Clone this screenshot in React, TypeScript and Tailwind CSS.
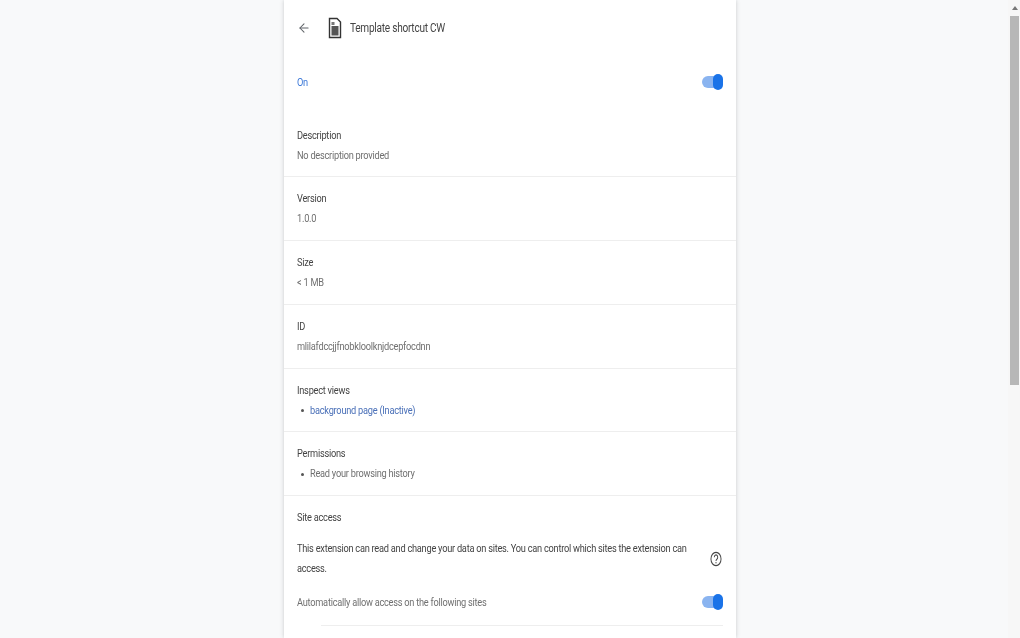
import { ArrowLeft } from "lucide-react"
import type { ReactNode } from "react"

// the reference is squeezed horizontally, so text gets narrowed from its left edge
function Squeezed({ children, className }: { children: ReactNode; className?: string }) {
    return <span className={`block origin-left scale-x-[0.84] whitespace-nowrap ${className ?? ""}`}>{children}</span>
}

function Toggle({ className }: { className?: string }) {
    return (
        <div className={`relative h-[12px] w-[21px] shrink-0 rounded-full bg-[#8ab4f0] ${className ?? ""}`}>
            <div className="absolute right-0 top-[-2px] h-[16px] w-[10px] rounded-full bg-[#1a73e8]" />
        </div>
    )
}

function InfoRow({ label, value }: { label: string; value: string }) {
    return (
        <div className="flex h-[63.75px] flex-col border-b border-[#eeeeee] pl-[13px] pt-[12px]">
            <Squeezed className="h-[20px] text-[11px] leading-[20px] text-[#444]">{label}</Squeezed>
            <Squeezed className="h-[20px] text-[11px] leading-[20px] text-[#707070]">{value}</Squeezed>
        </div>
    )
}

function ListRow({ label, value, link }: { label: string; value: string; link?: boolean }) {
    return (
        <div className="flex h-[63.75px] flex-col border-b border-[#eeeeee] pl-[13px] pt-[12px]">
            <Squeezed className="h-[20px] text-[11px] leading-[20px] text-[#444]">{label}</Squeezed>
            <div className="flex h-[20px] items-center text-[11px] leading-[20px]">
                <span className="ml-[4px] mr-[6px] h-[3px] w-[3px] rounded-full bg-[#555]" />
                <Squeezed className={link ? "text-[#4a70b8]" : "text-[#707070]"}>{value}</Squeezed>
            </div>
        </div>
    )
}

export default function App() {
    return (
        <div className="flex h-[638px] w-[1020px] overflow-hidden bg-[#f8f9fa] font-['Roboto',sans-serif] tracking-[-0.3px]">
            <div className="flex-1 pl-[284px]">
                <div className="h-[638px] w-[452px] bg-white shadow-[0_0_4px_rgba(60,64,67,0.25)] blur-[0.5px]">
                    {/* header */}
                    <div className="flex h-[55px] items-center pl-[11px]">
                        <div className="flex h-[18px] w-[18px] items-center justify-center text-[#5f6368]">
                            <ArrowLeft size={14} strokeWidth={1.8} />
                        </div>
                        <svg width="14" height="22" viewBox="0 0 14 22" className="ml-[15px]">
                            <path d="M1.5 1.5h7.5l3.5 3.5v15.5h-11z" fill="white" stroke="#333" strokeWidth="1.4" />
                            <rect x="3.5" y="9" width="7" height="9.5" fill="#555" />
                            <rect x="3.5" y="5" width="3" height="3" fill="#777" />
                        </svg>
                        <Squeezed className="ml-[8px] scale-x-[0.82] text-[12px] text-[#444]">Template shortcut CW</Squeezed>
                    </div>

                    <div className="flex h-[55px] items-center justify-between pl-[13px] pr-[13px]">
                        <Squeezed className="mt-[2px] text-[11px] text-[#3b78d8]">On</Squeezed>
                        <Toggle className="mb-[1px]" />
                    </div>

                    <div className="mt-[3.5px]">
                        <InfoRow label="Description" value="No description provided" />
                        <InfoRow label="Version" value="1.0.0" />
                        <InfoRow label="Size" value="< 1 MB" />
                        <InfoRow label="ID" value="mlilafdccjjfnobkloolknjdcepfocdnn" />
                        <ListRow label="Inspect views" value="background page (Inactive)" link />
                        <ListRow label="Permissions" value="Read your browsing history" />
                    </div>

                    {/* site access */}
                    <div className="px-[13px] pt-[12px]">
                        <Squeezed className="h-[20px] text-[11px] leading-[20px] text-[#444]">Site access</Squeezed>
                        <div className="mt-[11px] flex items-center justify-between">
                            <div className="w-[395px]">
                                <p className="w-[470px] origin-left scale-x-[0.84] text-[11px] leading-[20px] text-[#444]">
                                    This extension can read and change your data on sites. You can control which sites the extension can access.
                                </p>
                            </div>
                            <svg width="12" height="16" viewBox="0 0 14 14" preserveAspectRatio="none" className="mr-[1px]">
                                <circle cx="7" cy="7" r="5.9" fill="none" stroke="#444" strokeWidth="1.1" />
                                <path d="M5 5.4a2 2 0 1 1 3 1.8c-.7.4-1 .8-1 1.5" fill="none" stroke="#444" strokeWidth="1.1" />
                                <circle cx="7" cy="10.3" r=".7" fill="#444" />
                            </svg>
                        </div>
                        <div className="mt-[14px] flex h-[20px] items-center justify-between">
                            <Squeezed className="text-[11px] text-[#707070]">Automatically allow access on the following sites</Squeezed>
                            <Toggle className="mb-[3px]" />
                        </div>
                        <div className="ml-[24px] mt-[12px] border-b border-[#eeeeee]" />
                    </div>
                </div>
            </div>

            {/* scrollbar */}
            <div className="flex h-full w-[12px] flex-col bg-[#f7f7f7] pl-[2px] pr-[1px]">
                <div className="flex h-[16px] items-center justify-center">
                    <div className="h-0 w-0 border-x-[3px] border-b-[4px] border-x-transparent border-b-[#777]" />
                </div>
                <div className="h-[369px] bg-[#b7b7b7]" />
            </div>
        </div>
    )
}
